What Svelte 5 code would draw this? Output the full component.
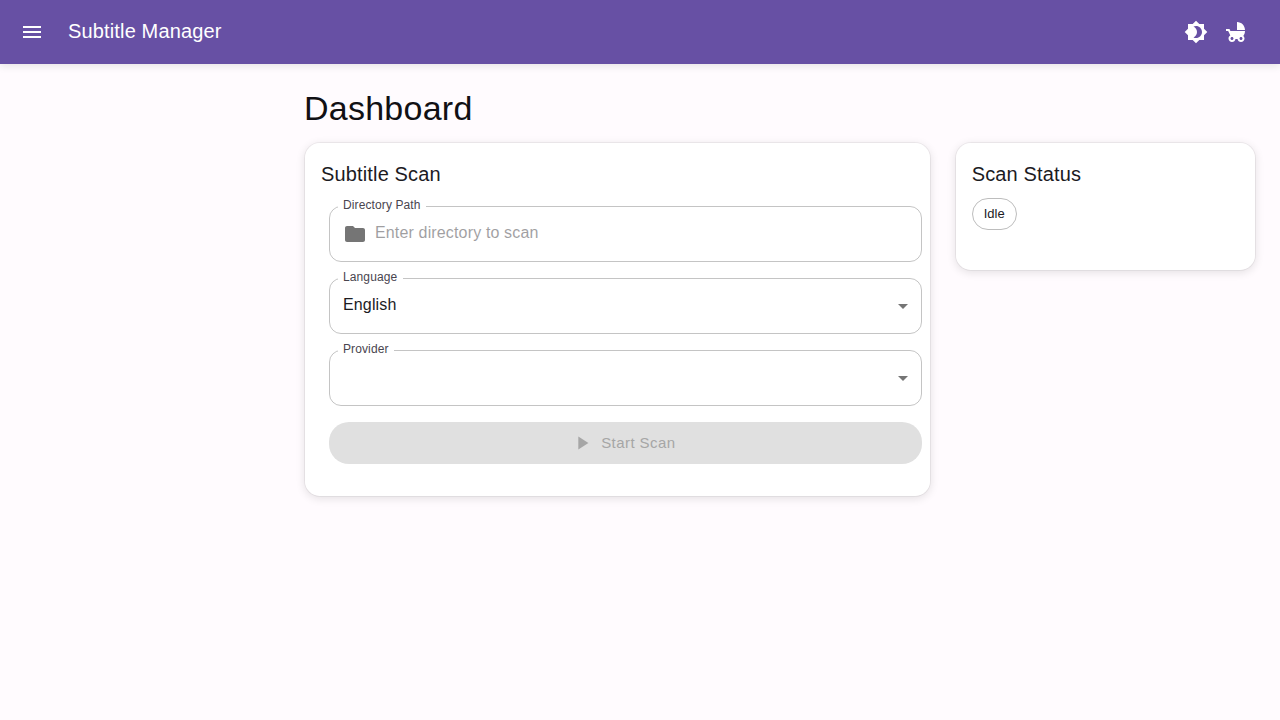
<script>
  let directory = $state('');
  const selects = [
    { label: 'Language', value: 'English' },
    { label: 'Provider', value: '' }
  ];
</script>

<header class="appbar">
  <button class="icon-btn" aria-label="Menu">
    <svg viewBox="0 0 24 24"><path d="M3 18h18v-2H3zm0-5h18v-2H3zm0-7v2h18V6z" /></svg>
  </button>
  <div class="brand">Subtitle Manager</div>
  <button class="icon-btn" aria-label="Toggle theme">
    <svg viewBox="0 0 24 24"><path d="M20 8.69V4h-4.69L12 .69 8.69 4H4v4.69L.69 12 4 15.31V20h4.69L12 23.31 15.31 20H20v-4.69L23.31 12zM12 18c-.89 0-1.74-.2-2.5-.55C11.56 16.5 13 14.42 13 12s-1.44-4.5-3.5-5.45C10.26 6.2 11.11 6 12 6c3.31 0 6 2.69 6 6s-2.69 6-6 6" /></svg>
  </button>
  <button class="icon-btn" aria-label="Child mode">
    <svg viewBox="0 0 24 24"><path d="M13 2v8h8c0-4.42-3.58-8-8-8m6.32 13.89C20.37 14.54 21 12.84 21 11H6.44l-.95-2H2v2h2.22s1.89 4.07 2.12 4.42c-1.1.59-1.84 1.75-1.84 3.08C4.5 20.43 6.07 22 8 22c1.76 0 3.22-1.3 3.46-3h2.08c.24 1.7 1.7 3 3.46 3 1.93 0 3.5-1.57 3.5-3.5 0-1.04-.46-1.97-1.18-2.61M8 20c-.83 0-1.5-.67-1.5-1.5S7.17 17 8 17s1.5.67 1.5 1.5S8.83 20 8 20m9 0c-.83 0-1.5-.67-1.5-1.5S16.17 17 17 17s1.5.67 1.5 1.5S17.83 20 17 20" /></svg>
  </button>
</header>

<main>
  <h1>Dashboard</h1>
  <div class="grid">
    <section class="card">
      <h2>Subtitle Scan</h2>
      <div class="form">
        <div class="field">
          <svg class="folder" viewBox="0 0 24 24"><path d="M10 4H4c-1.1 0-1.99.9-1.99 2L2 18c0 1.1.9 2 2 2h16c1.1 0 2-.9 2-2V8c0-1.1-.9-2-2-2h-8z" /></svg>
          <input bind:value={directory} placeholder="Enter directory to scan" aria-label="Directory Path" />
          <span class="label">Directory Path</span>
          <fieldset aria-hidden="true"><legend><span>Directory Path</span></legend></fieldset>
        </div>
        {#each selects as s}
          <div class="field">
            <span class="value">{s.value}</span>
            <svg class="arrow" viewBox="0 0 24 24"><path d="m7 10 5 5 5-5z" /></svg>
            <span class="label">{s.label}</span>
            <fieldset aria-hidden="true"><legend><span>{s.label}</span></legend></fieldset>
          </div>
        {/each}
        <button class="start" disabled>
          <svg viewBox="0 0 24 24"><path d="M8 5v14l11-7z" /></svg>
          <span>Start Scan</span>
        </button>
      </div>
    </section>
    <section class="card status">
      <h2>Scan Status</h2>
      <span class="chip">Idle</span>
    </section>
  </div>
</main>

<style>
  :global(body) {
    margin: 0;
    background: #fffbfe;
    color: #1c1b1f;
    font-family: "Liberation Sans", Arial, sans-serif;
    -webkit-font-smoothing: antialiased;
  }
  :global(*) { box-sizing: border-box; }
  svg { display: block; width: 24px; height: 24px; fill: currentColor; flex-shrink: 0; }
  .appbar {
    position: relative;
    display: flex;
    align-items: center;
    height: 64px;
    padding: 0 24px 0 12px;
    background: #6750a4;
    color: #fff;
    box-shadow: 0 2px 8px rgba(0, 0, 0, 0.1);
  }
  .icon-btn { display: flex; padding: 8px; border: 0; background: none; color: inherit; }
  .brand {
    flex: 1;
    margin-left: 16px;
    padding-bottom: 2px;
    font-size: 20px;
    line-height: 32px;
    letter-spacing: 0.0075em;
  }
  main { padding: 23px 24px 24px 304px; }
  h1 {
    margin: 0 0 13px;
    font-size: 34px;
    font-weight: 400;
    line-height: 42px;
    letter-spacing: 0.00735em;
    color: #111014;
  }
  .grid { display: grid; grid-template-columns: 626.67px 1fr; gap: 24px; align-items: start; }
  .card {
    padding: 15px 16px 24px;
    border: 1px solid rgba(0, 0, 0, 0.05);
    border-radius: 16px;
    background: #fff;
    background-clip: padding-box;
    box-shadow: 0 2px 8px rgba(0, 0, 0, 0.1);
  }
  h2 { margin: 0 0 8px; font-size: 20px; font-weight: 400; line-height: 32px; letter-spacing: 0.0075em; }
  .form { display: flex; flex-direction: column; gap: 16px; padding: 8px; margin-right: -8px; width: 608.67px; }
  .field {
    position: relative;
    display: flex;
    align-items: center;
    height: 56px;
    padding: 0 14px;
    font-size: 16px;
    letter-spacing: 0.00938em;
  }
  .folder { margin-right: 8px; color: rgba(0, 0, 0, 0.54); }
  input {
    flex: 1;
    padding: 0 0 3px;
    border: 0;
    outline: 0;
    background: none;
    font: inherit;
    letter-spacing: inherit;
    color: inherit;
  }
  input::placeholder { color: #1c1b1f; opacity: 0.42; }
  .value { flex: 1; padding-bottom: 3px; }
  .arrow { margin-right: -7px; color: rgba(0, 0, 0, 0.54); }
  .label {
    position: absolute;
    left: 14px;
    top: -9px;
    font-size: 12px;
    line-height: 17px;
    letter-spacing: 0.00938em;
    color: #49454f;
  }
  fieldset {
    position: absolute;
    inset: -5px 0 0;
    min-width: 0;
    margin: 0;
    padding: 0 8px;
    border: 1px solid rgba(0, 0, 0, 0.23);
    border-radius: 12px;
    pointer-events: none;
  }
  legend { height: 11px; padding: 0; font-size: 12px; line-height: 11px; visibility: hidden; white-space: nowrap; }
  legend span { display: inline-block; padding: 0 5px; }
  .start {
    display: flex;
    align-items: center;
    justify-content: center;
    gap: 8px;
    height: 42px;
    padding: 0 4px 0 0;
    border: 0;
    border-radius: 20px;
    background: #e0e0e0;
    color: #a6a6a6;
    font: 15px/26px "Liberation Sans", Arial, sans-serif;
    letter-spacing: 0.02857em;
  }
  .start svg { width: 22px; height: 22px; }
  .status { height: 129px; }
  .chip {
    display: inline-flex;
    align-items: center;
    height: 32px;
    padding: 0 11px 2px;
    border: 1px solid #bdbdbd;
    border-radius: 16px;
    font-size: 13px;
  }
</style>
